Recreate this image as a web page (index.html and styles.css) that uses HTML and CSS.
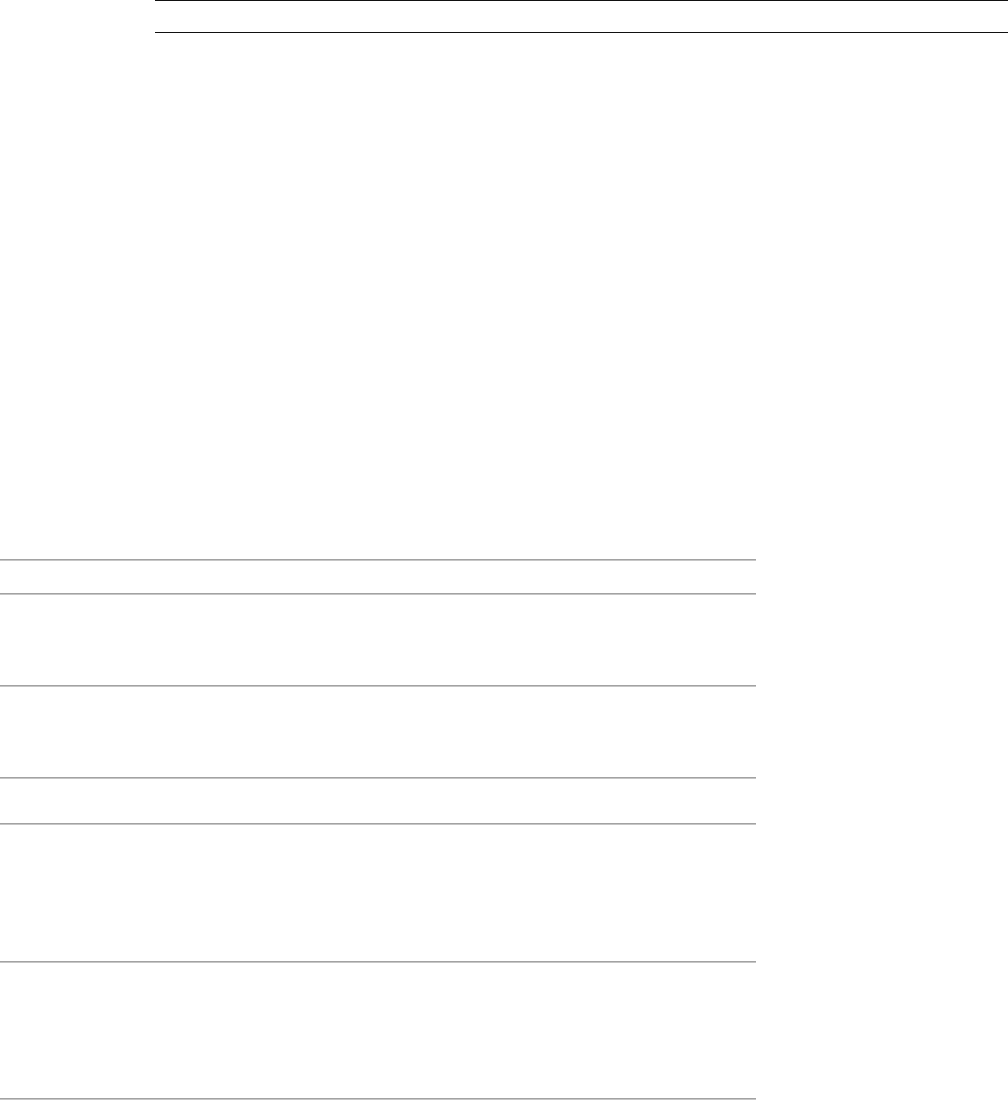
FILE: index.html
```html
<!DOCTYPE html>
<html>
<head>
<meta charset="utf-8">
<link rel="stylesheet" href="styles.css">
</head>
<body>
<div class="topbar"></div>
<div class="table">
  <div class="rule"></div>
  <div class="row r-head"></div>
  <div class="rule"></div>
  <div class="row r-2"></div>
  <div class="rule"></div>
  <div class="row r-2"></div>
  <div class="rule"></div>
  <div class="row r-1"></div>
  <div class="rule"></div>
  <div class="row r-3a"></div>
  <div class="rule"></div>
  <div class="row r-3b"></div>
  <div class="rule"></div>
</div>
</body>
</html>
```
FILE: styles.css
```css
html, body {
  margin: 0;
  padding: 0;
  background: #ffffff;
  font-family: "Liberation Sans", Arial, sans-serif;
}
.topbar {
  margin-left: 155px;
  height: 31px;
  border-top: 1px solid #111111;
  border-bottom: 1px solid #111111;
}
.table {
  width: 756px;
  margin-top: 526px;
  display: flex;
  flex-direction: column;
}
.rule {
  height: 0;
  border-top: 1px solid #a2a2a2;
  border-bottom: 1px solid #c6c6c6;
}
.r-head { height: 32px; }
.r-2 { height: 90px; }
.r-1 { height: 44px; }
.r-3a { height: 136px; }
.r-3b { height: 135px; }
```
